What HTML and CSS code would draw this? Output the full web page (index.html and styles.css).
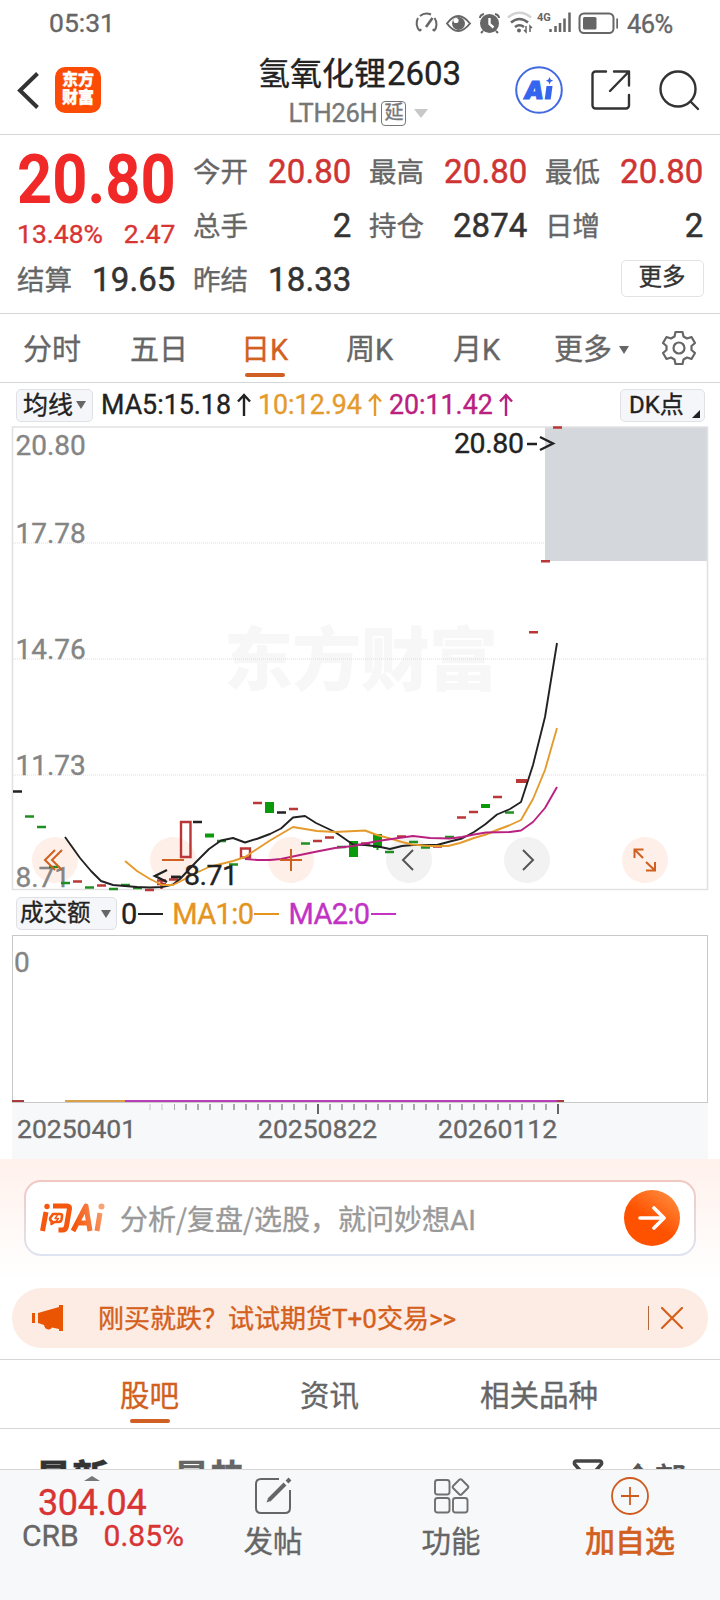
FILE: index.html
```
<!DOCTYPE html>
<html lang="zh-CN">
<head>
<meta charset="utf-8">
<title>氢氧化锂2603</title>
<link rel="stylesheet" href="styles.css">
</head>
<body>
<div class="screen">
  <div class="status">
    <span class="clock">05:31</span>
    <svg class="status-icons" width="206" height="30" viewBox="412 8 206 30" fill="none" stroke="#666" stroke-width="2">
      <path d="M420 31A10.500 10.500 0 0 1 418 18M420 16A10.500 10.500 0 0 1 431 14.500M434.500 18A10.500 10.500 0 0 1 434 31M420 31l1-2M434 31l-1-2"/>
      <path d="M426 27l6.500-9" stroke-width="2.600"/>
      <path d="M447 23.500Q458 8.500 470 23.500Q458 38.500 447 23.500Z"/>
      <circle cx="458.500" cy="23.500" r="6.500" fill="#666" stroke="none"/><circle cx="456" cy="20.500" r="2.600" fill="#fff" stroke="none"/>
      <circle cx="489.500" cy="23.500" r="9.500" fill="#666" stroke="none"/>
      <path d="M480 18q0-3 4-4M499 18q0-3-4-4M483 31l-2 2M496 31l2 2"/><path d="M489.500 18v6l4 3.500" stroke="#fff" stroke-width="2.400"/>
      <path d="M508 17.500Q519.500 8 531 17.500" stroke="#d2d2d2" stroke-width="2.600"/>
      <path d="M511 22.500Q519.500 15.500 528 22.500M515 27Q519.500 23.500 524 27" stroke-width="2.600"/>
      <circle cx="519" cy="30.500" r="2" fill="#666" stroke="none"/><path d="M526 26v6l-2-2M530 32v-6l2 2" stroke-width="1.500"/>
      <text x="537" y="21" class="net">4G</text>
      <path d="M550.500 32v-3M555.500 32v-6M560 32v-9M564.500 32V18.500M569.500 32V12.500" stroke-width="2.500"/>
      <rect x="579.500" y="13.500" width="34" height="19.500" rx="4.500"/><rect x="583" y="17" width="13.500" height="12.500" rx="1.500" fill="#666" stroke="none"/>
      <path d="M617.500 18.500v10" stroke-width="2.400"/>
    </svg>
    <span class="battery">46%</span>
  </div>

  <header class="header">
    <div class="nav-left">
      <svg width="26" height="44" viewBox="0 0 26 44" fill="none" stroke="#333" stroke-width="4"><path d="M22.500 5.500L5 22.500L22.500 39.500"/></svg>
      <div class="logo"><span>东方</span><span>财富</span></div>
    </div>
    <div class="title">
      <div class="title-name">氢氧化锂<span>2603</span></div>
      <div class="title-code">LTH26H<span class="delay">延</span><i class="caret-light"></i></div>
    </div>
    <div class="nav-right">
      <svg width="48" height="48" viewBox="0 0 48 48"><circle cx="24" cy="24" r="22.800" fill="none" stroke="#4169e1" stroke-width="2"/><text x="9" y="33" class="ai-a">A</text><path d="M31.500 20h6l-1.800 13.500h-6z" fill="#3564ee"/><path d="M34.500 11l1.100 2.600 2.600 1.100-2.600 1.100-1.100 2.600-1.100-2.600-2.600-1.100 2.600-1.100z" fill="#3564ee"/></svg>
      <svg width="40" height="40" viewBox="0 0 40 40" fill="none" stroke="#333" stroke-width="2.400" stroke-linecap="round" stroke-linejoin="round"><path d="M15 1.500H4.500a3 3 0 0 0-3 3v31a3 3 0 0 0 3 3H35a3 3 0 0 0 3-3V25M23 1.500h15v14M37.500 2L19 21"/></svg>
      <svg width="42" height="42" viewBox="0 0 42 42" fill="none" stroke="#333" stroke-width="2.400" stroke-linecap="round"><circle cx="19" cy="20" r="17.500"/><path d="M31.500 32.500L39 40"/></svg>
    </div>
  </header>

  <section class="quote">
    <div class="last">
      <div class="price">20.80</div>
      <div class="change"><span>13.48%</span><span>2.47</span></div>
    </div>
    <div class="cell"><span>今开</span><b class="up">20.80</b></div>
    <div class="cell"><span>最高</span><b class="up">20.80</b></div>
    <div class="cell"><span>最低</span><b class="up">20.80</b></div>
    <div class="cell"><span>总手</span><b>2</b></div>
    <div class="cell"><span>持仓</span><b>2874</b></div>
    <div class="cell"><span>日增</span><b>2</b></div>
    <div class="cell"><span>结算</span><b>19.65</b></div>
    <div class="cell"><span>昨结</span><b>18.33</b></div>
    <div class="cell more-cell"><span class="more">更多</span></div>
  </section>

  <nav class="periods">
    <span>分时</span><span>五日</span><span class="active">日K</span><span>周K</span><span>月K</span>
    <span class="more-tab">更多<i class="caret"></i></span>
    <svg width="36" height="36" viewBox="-18 -18 36 36" fill="none" stroke="#666" stroke-width="2.200" stroke-linejoin="round"><path d="M-3.500-16H3.500L4.500-11.500L8-9.500L12.500-11L16-5L12.500-2V2L16 5L12.500 11L8 9.500L4.500 11.500L3.500 16H-3.500L-4.500 11.500L-8 9.500L-12.500 11L-16 5L-12.500 2V-2L-16-5L-12.500-11L-8-9.500L-4.500-11.500Z"/><circle r="5.500"/></svg>
  </nav>

  <div class="ma-row">
    <span class="chip ma-chip">均线<i class="caret"></i></span>
    <span class="ma5">MA5:15.18<svg class="arrow" viewBox="0 0 16 24"><path d="M8 23V2M2 8.500L8 2l6 6.500"/></svg></span>
    <span class="ma10">10:12.94<svg class="arrow" viewBox="0 0 16 24"><path d="M8 23V2M2 8.500L8 2l6 6.500"/></svg></span>
    <span class="ma20">20:11.42<svg class="arrow" viewBox="0 0 16 24"><path d="M8 23V2M2 8.500L8 2l6 6.500"/></svg></span>
    <span class="chip dk-chip">DK点<i class="corner"></i></span>
  </div>

  <svg class="chart" width="720" height="466" viewBox="0 426 720 466">
    <text class="watermark" x="224" y="685" textLength="274">东方财富</text>
    <g class="grid"><path d="M13 543H707M13 659H707M13 775H707"/></g>
    <rect x="545" y="427" width="162" height="134" fill="#d4d7dc"/>
    <path d="M12.500 427H707.500V889.500H12.500Z" fill="none" stroke="#e2e2e2" stroke-width="1.600"/>
    <g class="tools">
      <circle cx="55" cy="860" r="23"/><circle cx="173" cy="860" r="23"/><circle cx="291" cy="860" r="23"/><circle cx="645" cy="860" r="23"/>
      <g class="plain"><circle cx="409" cy="860" r="23"/><circle cx="527" cy="860" r="23"/></g>
    </g>
    <g class="axis"><text x="15.500" y="455">20.80</text><text x="15.500" y="543">17.78</text><text x="15.500" y="659">14.76</text><text x="15.500" y="775">11.73</text><text x="15.500" y="886.500">8.71</text></g>
    <g class="bar-green"><path d="M25 816.500h9M37 827h9M49 867h9M61 883h9M85 887.500h9M109 889h9M121 885h9M133 888h9M217 841h9M229 864.500h9M301 843.500h9M337 847h9M385 852h9M409 842h9M421 847.500h9M445 837h9M505 812.500h9"/></g>
    <g fill="#0b9a0b"><path d="M205 833.500h9v4h-9zM265 802h9v11h-9zM349 841h9v16h-9zM373 834h9v14h-9zM376.500 848h2v2h-2zM481 804h9v4h-9z"/></g>
    <g class="bar-black"><path d="M13 791.500h9M193 822h9M277 812.500h9M171 877h9"/></g>
    <g class="bar-red"><path d="M73 881.500h9M97 885.500h9M145 890h9M157 880.500h9M169 879.500h9M253 803h9M289 809h9M313 841h9M325 837.500h9M361 843.500h9M397 836.500h9M433 846.500h9M457 817.500h9M469 812h9M493 797h9M529 632.300h9M541 561.300h9M553 427.500h9"/><path d="M516 781h11" stroke-width="4"/><path d="M161.500 880v9M157 884h9"/><path d="M181 822h9.500v35h-9.500zM241 848.500h9v9h-9z"/></g>
    <polyline class="l5" points="65,837 80,858 91,871 101,881 113,885 125,886 137,887 150,887.500 162,887 173,884.500 180,879 197,861 209,849 221,840.500 233,838 245,842.500 258,838.500 270,834 281,828.500 293,817.500 305,816 316,823 335,832 353,844.500 365,845 378,846.500 390,849 402,846 413,845 437,845 450,841.500 462,838.500 474,832 485,824.500 497,814.500 510,809 521,802 533,765 545,717 557,643"/>
    <polyline class="l10" points="125,861 137,871 150,879 162,885 173,885 185,879 197,872.500 209,867 221,864 233,861 245,857 257,849 270,840.500 281,834 293,827 305,829 317,831 335,832 365,830.500 377,835 390,838.500 402,842 412,844.500 430,846 448,846 460,843 474,838 486,834.500 497,830 509,825.500 521,820 533,799 545,770 557,728"/>
    <polyline class="l20" points="245,859 258,860 270,860 281,859 300,855 317,851.500 335,848 353,846 378,841 395,838.500 413,836 430,838 450,838.500 462,837 474,834.500 486,832.500 510,832 521,830.500 533,822 545,808 557,787"/>
    <g class="glyph"><path d="M55 850l-10 10 10 10M62 850l-10 10 10 10M162 860h22M280 860h22M291 849v22M643 858l-8-8M634.500 858v-8.500h9M646 862l8.500 8M655 862v8.500h-9"/><path class="dark" d="M413 850l-10 10 10 10M523 850l10 10-10 10"/></g>
    <g class="note"><text x="454" y="453" textLength="70">20.80</text><path d="M527 444h10M540 437l13 6.500-13 6.500"/><text x="184" y="884.500" textLength="54">8.71</text><path d="M167 870l-12 6 12 6M171 877h10"/></g>
  </svg>

  <div class="vol-row">
    <span class="chip vol-chip">成交额<i class="caret"></i></span>
    <span class="v0">0<i class="dash"></i></span>
    <span class="v1">MA1:0<i class="dash"></i></span>
    <span class="v2">MA2:0<i class="dash"></i></span>
  </div>

  <div class="volume">
    <span>0</span>
    <div class="vol-lines"><i class="seg-red"></i><i class="seg-gap"></i><i class="seg-gold"></i><i class="seg-magenta"></i><i class="seg-end"></i></div>
  </div>
  <div class="dates">
    <svg width="696" height="12" viewBox="12 1104 696 12" stroke="#aaa" stroke-width="2"><path d="M150 1104v6M162 1104v6" stroke="#ddd"/><path d="M174 1107H557" stroke-width="6" stroke-dasharray="2 10" stroke-dashoffset="1"/><path d="M318 1104v10M558 1104v10" stroke="#666"/></svg>
    <div class="date-labels"><span>20250401</span><span>20250822</span><span>20260112</span></div>
  </div>

  <section class="ask">
    <div class="ask-box">
      <svg width="66" height="30" viewBox="0 0 66 30" fill="none" stroke="url(#g)" stroke-width="5" stroke-linejoin="round">
        <defs><linearGradient id="g" gradientUnits="userSpaceOnUse" x1="0" y1="20" x2="66" y2="4"><stop offset=".5" stop-color="#f4570d"/><stop offset="1" stop-color="#f8a375"/></linearGradient></defs>
        <path d="M6 9L2.500 28M13 3H27q3 0 2.400 3L26.500 23q-.7 4-4 4h-4M33 28L46 3l4 25M39 20h9M60 10L57 28"/><circle cx="7" cy="3.500" r="2.700" fill="#f4570d" stroke="none"/><circle cx="61.500" cy="3.500" r="3" fill="#f8a375" stroke="none"/>
        <path d="M13 11h7q2.500 0 2 2.500l-.5 3q-.5 2.500-3 2.500h-4l-3 2 .2-3q-2-.5-1.500-3z" stroke-width="2.600"/><path d="M17.500 12l-2.500 3.500h3.500l-2.500 3" stroke-width="1.300"/>
      </svg>
      <span class="ask-hint">分析/复盘/选股，就问妙想<em>AI</em></span>
      <span class="go"><svg width="28" height="26" viewBox="0 0 28 26" fill="none" stroke="#fff" stroke-width="3.600" stroke-linecap="round" stroke-linejoin="round"><path d="M2 13h24M16 3l10 10-10 10"/></svg></span>
    </div>
  </section>

  <div class="promo">
    <svg width="31" height="26" viewBox="0 0 31 26" fill="#ea5504"><path d="M0 8h3v10H0zM6 8L27 2V0h4v26h-4v-2l-7-1.500q-2 3-5 1.500-2 0-3-4L6 18z"/></svg>
    <span class="promo-text">刚买就跌？试试期货T+0交易&gt;&gt;</span>
    <i class="bar"></i>
    <svg width="22" height="22" viewBox="0 0 22 22" fill="none" stroke="#d4601c" stroke-width="2.200" stroke-linecap="round"><path d="M1 1l20 20M21 1L1 21"/></svg>
  </div>

  <nav class="sections"><span class="active">股吧</span><span>资讯</span><span>相关品种</span></nav>

  <div class="feed">
    <span class="newest">最新</span><span class="hot">最热</span>
    <svg width="32" height="30" viewBox="0 0 32 30" fill="none" stroke="#444" stroke-width="3.500" stroke-linejoin="round"><path d="M4 2h24q2 0 1.500 3L20 16v9l-8 3V16L2.500 5Q2 2 4 2z"/></svg>
    <span class="all">全部</span>
  </div>

  <footer class="bottom">
    <div class="index"><i class="up-caret"></i><div class="index-value">304.04</div><div class="index-line"><span>CRB</span><b>0.85%</b></div></div>
    <div class="action">
      <svg width="38" height="38" viewBox="0 0 38 38" fill="none" stroke="#666" stroke-width="2"><path d="M25 2H7Q2 2 2 7v24q0 5 5 5h24q5 0 5-5V13"/><path d="M15 23L31 7M33 5l3-3" stroke-width="4"/><path d="M12.500 25.500l1.500-4 2.500 2.500z" fill="#666" stroke="none"/></svg>
      <span>发帖</span>
    </div>
    <div class="action">
      <svg width="38" height="38" viewBox="0 0 38 38" fill="none" stroke="#707070" stroke-width="1.900"><rect x="3" y="3" width="14.500" height="14.500" rx="2.500"/><rect x="3" y="21" width="14.500" height="14.500" rx="2.500"/><rect x="21" y="21" width="14.500" height="14.500" rx="2.500"/><rect x="22.500" y="4" width="12" height="12" rx="1.800" transform="rotate(45 28.500 10)"/></svg>
      <span>功能</span>
    </div>
    <div class="action add">
      <svg width="38" height="38" viewBox="0 0 38 38" fill="none" stroke="#cf5b1c" stroke-width="1.800"><circle cx="19" cy="19" r="18"/><path d="M10 19h18M19 10v18"/></svg>
      <span>加自选</span>
    </div>
  </footer>
</div>
</body>
</html>
```
FILE: styles.css
```
* { box-sizing: border-box; }
body { margin: 0; background: #fff; font-family: Roboto, "Noto Sans CJK SC", sans-serif; color: #333; -webkit-text-stroke: .35px; }
i, em { font-style: normal; }
b { font-weight: 500; }
svg { display: block; flex: none; }
svg text { -webkit-text-stroke: 0; }
.screen { width: 720px; height: 1600px; overflow: hidden; display: flex; flex-direction: column; white-space: nowrap; }
.screen > * { flex: none; }

.status { height: 45px; padding: 0 44px 0 49px; display: flex; align-items: center; color: #666; font-size: 26.500px; }
.clock { flex: 1; }
.battery { margin-left: 9px; width: 49px; font-size: 25.500px; letter-spacing: -.6px; padding-top: 2px; }
.net { font: 700 11px Roboto, sans-serif; fill: #666; stroke: none; }

.header { height: 90px; border-bottom: 1px solid #d6d6d6; display: grid; grid-template-columns: 180px 360px 180px; }
.nav-left { display: flex; align-items: center; padding-left: 15px; }
.logo { width: 46px; height: 46px; margin-left: 14px; border-radius: 10px; background: #fb4b04; color: #fff; font-size: 16px; line-height: 18.500px; font-weight: 900; text-align: center; padding-top: 4px; display: flex; flex-direction: column; }
.title { text-align: center; }
.title-name { height: 51px; line-height: 57px; font-size: 32px; color: #222; padding-right: 1px; }
.title-name span { font-size: 33px; margin-left: 1px; }
.title-code { display: flex; justify-content: center; align-items: center; height: 30px; margin-top: 2px; padding-right: 3px; font-size: 25.500px; color: #777; letter-spacing: -.3px; }
.delay { width: 25px; height: 25px; border: 1.500px solid #777; border-radius: 4px; font-size: 19px; line-height: 21px; margin: 0 8px 0 4px; }
.caret-light { border: 7px solid transparent; border-top: 9px solid #c8c8c8; border-bottom: 0; }
.nav-right { display: flex; align-items: center; margin-left: -25px; }
.nav-right svg + svg { margin-left: 28px; }
.ai-a { font: italic 900 25px Inter, Roboto, sans-serif; fill: #3564ee; stroke: #3564ee; stroke-width: 1; }

.quote { height: 179px; padding: 8px 16px 0 17px; border-bottom: 1px solid #d6d6d6; display: grid; grid-template-columns: repeat(4, 158.500px); grid-template-rows: repeat(3, 54px); column-gap: 17.500px; }
.last { grid-row: span 2; color: #f02828; }
.price { font-size: 69px; line-height: 74px; font-weight: 700; height: 75px; width: 174px; transform: scaleX(.89); transform-origin: left; -webkit-text-stroke: 0; }
.change { display: flex; justify-content: space-between; font-size: 26.500px; line-height: 32px; color: #d93434; }
.cell { display: flex; justify-content: space-between; align-items: center; font-size: 27.500px; color: #666; }
.cell b { font-size: 33px; color: #333; font-weight: 400; letter-spacing: .1px; padding-top: 2px; -webkit-text-stroke: .5px; }
.cell .up { color: #cf3434; }
.more-cell { grid-column: 4; justify-content: flex-end; }
.more { width: 83px; height: 37px; border: 1.500px solid #e2e3e5; border-radius: 5px; font-size: 23.500px; line-height: 33px; text-align: center; color: #333; }

.periods { height: 69px; border-bottom: 1px solid #d6d6d6; padding-left: 23px; display: grid; grid-template-columns: 107px 111px 105px 107px 101px 107px 36px; align-items: center; justify-items: start; font-size: 29px; color: #666; }
.periods span { line-height: 68px; height: 68px; padding-top: 1.500px; position: relative; }
.active { color: #d2601e !important; position: relative; }
.active::after { content: ""; position: absolute; left: 50%; margin-left: -20px; bottom: 5px; width: 40px; height: 4px; border-radius: 2px; background: #cf5f22; }
.caret { display: inline-block; border: 5px solid transparent; border-top: 8px solid #666; border-bottom: 0; vertical-align: middle; }
.more-tab .caret { margin: -4px 0 0 7px; }

.ma-row { height: 44px; display: flex; align-items: center; padding: 0 15px 0 16px; font-size: 26.800px; }
.chip { background: #f5f6f9; border: 1px solid #dfe1e5; border-radius: 5px; height: 33px; line-height: 29px; font-size: 25px; color: #222; display: flex; align-items: center; }
.ma-chip { width: 77px; padding-left: 6px; margin-right: 8px; }
.ma-chip .caret { margin-left: 3px; }
.ma-row > span:not(.chip) { display: flex; align-items: center; margin-right: 6px; }
.arrow { width: 16px; height: 24px; margin-left: 5px; fill: none; stroke: currentColor; stroke-width: 2.400; }
.ma5 { color: #222; }
.ma10 { color: #e59a2c; }
.ma20 { color: #b9207f; }
.dk-chip { margin-left: auto; width: 85px; padding-left: 8px; font-size: 24px; position: relative; }
.corner { position: absolute; right: 4px; bottom: 3px; border-bottom: 8px solid #222; border-left: 8px solid transparent; }

.chart { margin-top: -1px; }
.chart text { font-family: Roboto, sans-serif; -webkit-text-stroke: 0; }
.chart .watermark { font: 900 69px "Noto Sans CJK SC", sans-serif; fill: #f7f7f7; }
.grid path { stroke: #dcdcdc; stroke-dasharray: 1 1; }
.tools { fill: #feefe8; }
.plain { fill: #f2f2f2; }
.axis { font-size: 28px; fill: #858585; stroke: #858585; stroke-width: .35; }
.bar-green, .bar-black, .bar-red { fill: none; stroke-width: 2.400; }
.bar-green { stroke: #208e20; }
.bar-black { stroke: #222; }
.bar-red { stroke: #b93737; }
polyline { fill: none; stroke-width: 1.900; stroke-linejoin: round; }
.l5 { stroke: #222; }
.l10 { stroke: #e59a2c; }
.l20 { stroke: #b9207f; }
.glyph { fill: none; stroke: #d0601f; stroke-width: 2; }
.dark { stroke: #555; }
.note { font-size: 28.500px; fill: #222; stroke: #222; stroke-width: .35; }
.note path { fill: none; stroke: #222; stroke-width: 2.400; }

.vol-row { height: 43px; display: flex; align-items: center; padding: 0 16px; font-size: 29px; }
.vol-chip { width: 101px; padding-left: 3px; font-size: 23.500px; margin-right: 4px; }
.vol-chip .caret { margin-left: 10px; }
.dash { display: inline-block; width: 25px; height: 2px; margin-left: 1px; background: currentColor; vertical-align: 9px; }
.v0 { color: #222; }
.v1 { color: #e59420; margin-left: 9px; letter-spacing: -.6px; }
.v2 { color: #c233c5; margin-left: 9px; letter-spacing: -.6px; }

.volume { height: 168px; margin: 0 12px; border: 1px solid #c9c9c9; color: #858585; font-size: 28px; padding: 0 1px; display: flex; flex-direction: column; justify-content: space-between; line-height: 53px; }
.vol-lines { display: flex; height: 2px; margin-left: -2px; }
.seg-red { width: 12px; background: #a83c3c; }
.seg-gap { width: 41px; }
.seg-gold { width: 60px; background: #dba04a; }
.seg-magenta { width: 432px; background: #b83fb8; }
.seg-end { width: 7px; background: #a83c3c; }

.dates { height: 56px; margin: 0 12px; background: #f7f8fa; color: #666; font-size: 26.500px; padding-top: 1px; }
.date-labels { display: grid; grid-template-columns: 241px 180px 1fr; padding-left: 5px; line-height: 25px; }

.ask { height: 128px; padding: 21px 24px 0; background: linear-gradient(#fff1ec, #fff 95%); }
.ask-box { height: 76px; padding: 0 14px; border: 2px solid transparent; border-radius: 17px; background: linear-gradient(#fff, #fff) padding-box, linear-gradient(#f1c8c0, #dfe4f2) border-box; display: flex; align-items: center; }
.ask-hint { margin-left: 14px; flex: 1; color: #999; font-size: 28px; font-family: "Noto Sans CJK SC", sans-serif; }
.ask-hint em { font-family: Roboto, sans-serif; }
.go { width: 56px; height: 56px; border-radius: 50%; background: linear-gradient(35deg, #ff5200 45%, #ff9548); display: flex; align-items: center; justify-content: center; }

.promo { height: 60px; margin: 1px 12px 0; padding: 0 25px 0 20px; border-radius: 30px; background: #fcece4; display: flex; align-items: center; color: #d4601c; }
.promo-text { margin-left: 35px; flex: 1; font-size: 26px; padding-bottom: 3px; }
.bar { width: 1px; height: 24px; background: #b5683c; margin-right: 12px; }

.sections { height: 70px; margin-top: 11px; border: 1px solid #d6d6d6; border-width: 1px 0; padding-left: 120px; display: flex; gap: 121px; font-size: 29.500px; color: #666; line-height: 68px; }
.sections span { height: 68px; padding-top: 2px; }
.feed { height: 40px; overflow: hidden; display: flex; padding: 29px 34px 0 35px; font-size: 37px; line-height: 44px; font-weight: 900; color: #333; }
.hot { margin-left: 64px; color: #666; font-weight: 700; }
.feed svg { margin: 1px 18px 0 auto; }
.all { font-size: 32px; font-weight: 500; color: #555; }

.bottom { height: 131px; border-top: 1px solid #d6d6d6; background: #f7f8fa; display: grid; grid-template-columns: 184px 178px 178px 180px; }
.index { padding: 13px 0 0 22px; position: relative; color: #d93434; }
.up-caret { position: absolute; left: 84px; top: 6px; border: 8px solid transparent; border-bottom: 5px solid #777; border-top: 0; }
.index-value { font-size: 36px; line-height: 40px; padding-left: 16px; letter-spacing: -.4px; }
.index-line { display: flex; justify-content: space-between; width: 162px; font-size: 30px; line-height: 26px; color: #666; }
.index-line b { color: #d93434; font-weight: 400; }
.action { display: flex; flex-direction: column; align-items: center; padding-top: 7px; font-size: 29.500px; line-height: 54px; color: #666; }
.add { color: #d2601e; font-weight: 500; font-size: 30px; }
```
